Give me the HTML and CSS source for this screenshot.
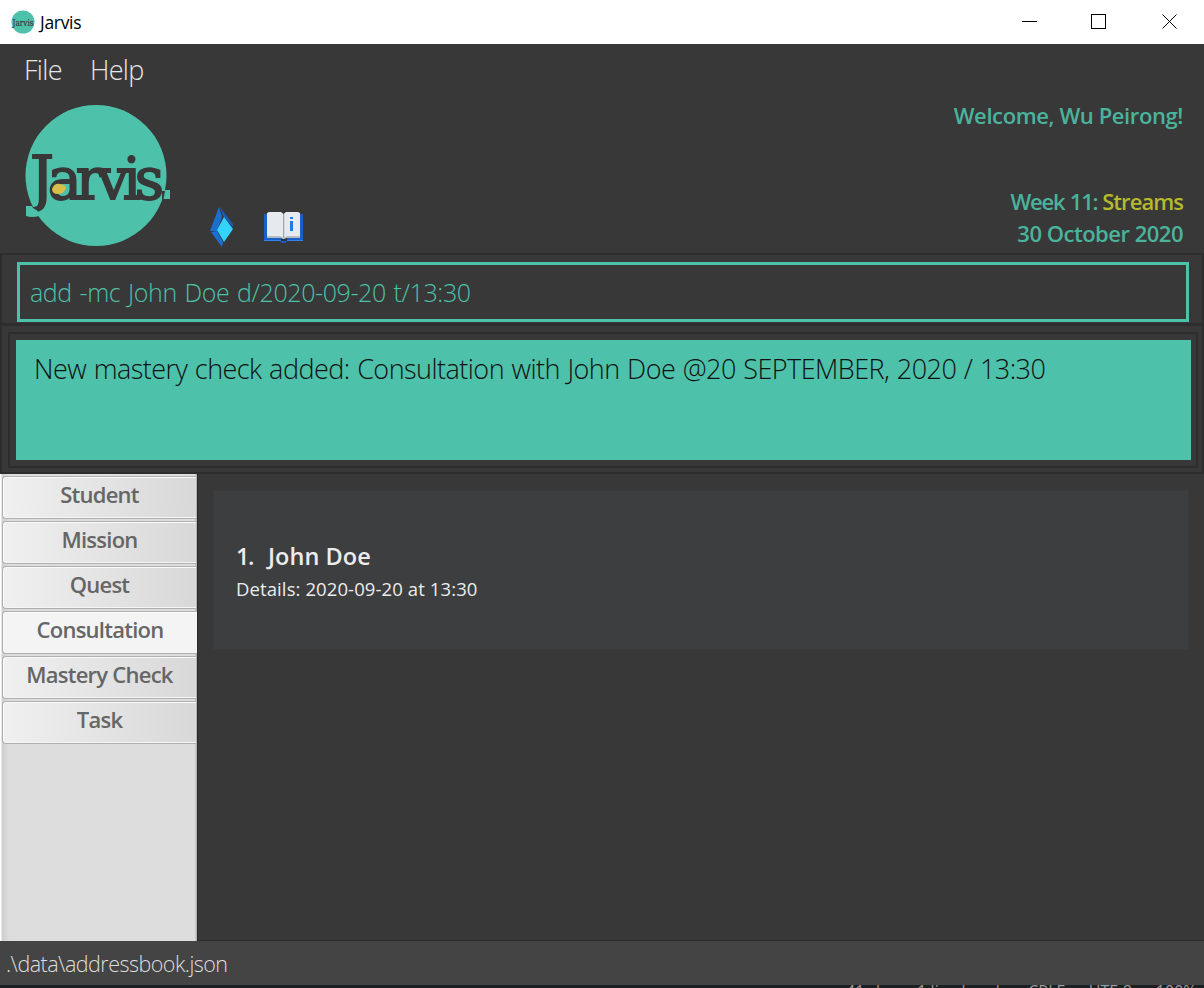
FILE: index.html
```html
<!DOCTYPE html>
<html lang="en">
<head>
<meta charset="utf-8">
<title>Jarvis</title>
<link rel="stylesheet" href="styles.css">
</head>
<body>
<div class="window">
  <header class="titlebar">
    <svg class="app-icon" viewBox="0 0 24 24"><circle cx="12" cy="12" r="11.5" fill="#4dc1a9"/><text x="1.500" y="15.500" textLength="21" lengthAdjust="spacingAndGlyphs" class="logo-text" font-size="10">Jarvis</text></svg>
    <span class="app-name">Jarvis</span>
    <svg class="controls" viewBox="0 0 156 16" fill="none" stroke="#000" shape-rendering="crispEdges"><path d="M0 7.500h15M69.500.500h14v14h-14z"/><path d="M140.500.500l14 14M154.500.500l-14 14" shape-rendering="auto"/></svg>
  </header>
  <nav class="menu"><span class="file">File</span><span class="help">Help</span></nav>
  <section class="header">
    <svg class="logo" viewBox="0 0 150 144">
      <circle cx="74" cy="71.500" r="70.500" fill="#4dc1a9"/>
      <path d="M143 86h5v9h-8z" fill="#4dc1a9"/>
      <text x="8" y="95" textLength="134" lengthAdjust="spacing" class="logo-text" font-size="60"><tspan class="logo-j">J</tspan><tspan font-size="57">arvis</tspan></text>
      <path d="M4 102h6q1 3 5 4l2 6q-7 2-13 0z" fill="#4dc1a9"/>
      <path d="M30 85q2-6 8-5q6 1 6 4q-2 6-8 6q-6 0-6-5z" fill="#d8bd49"/>
      <path d="M140 87h3l-1.500 8H140z" fill="#383838"/>
    </svg>
    <svg class="gem" viewBox="0 0 24 40">
      <path d="M9 0l3 10-5 14H0z" fill="#1b6fd0"/><path d="M10 0l13 17v3L13 9z" fill="#185cb5"/><path d="M1 25l6-1 6 11-1 5z" fill="#1b6fd0"/><path d="M14 10l9 12-9 13-7-12z" fill="#32d3fd"/>
    </svg>
    <svg class="book" viewBox="0 0 40 32">
      <path d="M0 3h39v27H23l-2 2h-3l-2-2H0z" fill="#1a5fc8"/><path d="M0 29h39v1H0z" fill="#3183e5"/><path d="M17 27h6v3h-6z" fill="#283442"/>
      <path d="M3 2l2-1h12l2.500 2L22 1h12l2 1v25H22l-2 1-3-1H3z" fill="#e6eaee"/><path d="M3 25h13l3.500 2 3.500-2h13v2H22l-2 1-3-1H3z" fill="#b4bdc4"/><path d="M19 3h1.300v24H19z" fill="#9eaab2"/><path d="M26 10h3v10h-3zM26 6h3v2h-3z" fill="#1d7ae8"/>
    </svg>
    <div class="info">
      <div class="welcome">Welcome, Wu Peirong!</div>
      <div class="week"><span class="week-no">Week 11:</span> <span class="topic">Streams</span></div>
      <div class="date">30 October 2020</div>
    </div>
  </section>
  <section class="command"><div class="input"><span>add -mc John Doe d/2020-09-20 t/13:30</span></div></section>
  <section class="result"><div class="result-frame"><div class="result-box"><span>New mastery check added: Consultation with John Doe @20 SEPTEMBER, 2020 / 13:30</span></div></div></section>
  <main class="content">
    <aside class="tabs">
      <div class="tab">Student</div>
      <div class="tab">Mission</div>
      <div class="tab">Quest</div>
      <div class="tab selected">Consultation</div>
      <div class="tab">Mastery Check</div>
      <div class="tab">Task</div>
    </aside>
    <div class="list">
      <article class="card">
        <div class="name"><span class="num">1.</span><span class="person">John Doe</span></div>
        <div class="details"><span>Details: 2020-09-20 at 13:30</span></div>
      </article>
    </div>
  </main>
  <footer class="status"><span>.\data\addressbook.json</span></footer>
  <div class="behind"><span>41 chars, 1 line break</span><span>CRLF</span><span>UTF-8</span><span>100%</span></div>
</div>
</body>
</html>
```

FILE: styles.css
```css
* { box-sizing: border-box; }
body { margin: 0; font-family: "Open Sans", "Noto Sans", sans-serif; background: #383838; }
.window { width: 1204px; height: 988px; display: flex; flex-direction: column; overflow: hidden; white-space: nowrap; background: #383838; }
.window svg { display: block; flex: none; }
.titlebar { height: 44px; flex: none; background: #fff; display: flex; align-items: center; padding: 0 26px 0 11px; }
.app-icon { width: 24px; height: 24px; margin-right: 5px; margin-bottom: 1px; }
.app-name { font-size: 17.5px; line-height: 43px; color: #000; letter-spacing: -.3px; }
.controls { width: 156px; height: 16px; margin-left: auto; }
.logo-text { font-family: "DejaVu Serif", serif; font-weight: 400; fill: #383838; stroke: #383838; stroke-width: 1.8px; }
.app-icon .logo-text { stroke-width: .2px; }
.menu { height: 56px; flex: none; display: flex; padding-left: 24px; font-size: 27px; font-weight: 300; line-height: 52px; color: #e6e6e6; }
.file { width: 66px; }
.menu span { letter-spacing: -.7px; }
.header { height: 153px; flex: none; display: flex; padding: 4px 21px 0 22px; }
.logo { width: 150px; height: 144px; }
.gem { width: 24px; height: 40px; margin: 103px 0 0 38px; }
.book { width: 40px; height: 32px; margin: 107px 0 0 30px; }
.info { margin-left: auto; text-align: right; font-size: 22px; font-weight: 600; line-height: 32px; color: #4bb39c; letter-spacing: -.5px; }
.welcome { margin-top: -5px; padding-bottom: 54px; letter-spacing: -.4px; }
.week { letter-spacing: -.95px; }
.week-no { letter-spacing: -1.2px; word-spacing: 1px; }
.topic { color: #b7b92c; }
.command { height: 71px; flex: none; border: 2px solid #2d2d2d; border-bottom-width: 1px; padding: 7px 13px 0 15px; }
.input { height: 60px; border: 3px solid #4dc1a9; padding-left: 10px; color: #4dc1a9; font-size: 25px; font-weight: 300; line-height: 55px; letter-spacing: -.4px; word-spacing: 1.6px; }
.result { height: 150px; flex: none; border: 2px solid #2d2d2d; padding: 6px 4px 0 6px; }
.result-frame { height: 136px; border: 2px solid #2d2d2d; padding: 6px 5px 6px 6px; }
.result-box { height: 120px; background: #4dc1a9; padding-left: 18px; color: #111; font-size: 27px; font-weight: 300; line-height: 58px; letter-spacing: -.54px; word-spacing: 1px; }
.content { height: 467px; flex: none; display: flex; }
.tabs { width: 197px; padding: 2px 0 0 2px; background: linear-gradient(90deg, #fff 0 1px, #cfcfcf 2px, #ddd 9px, #ddd 195px, #b5b5b5 196px); }
.tab { height: 43px; margin: 0 1px 2px 0; border: 1px solid #b0b0b0; border-right: 0; border-radius: 4px 0 0 4px; box-shadow: inset 1px 1px #fafafa, inset 0 -1px #f5f5f5; background: linear-gradient(90deg, #f0f0f0, #d8d8d8); text-align: center; color: #666; font-size: 22px; font-weight: 600; line-height: 34px; letter-spacing: -.75px; }
.tab.selected { background: #f4f4f4; margin-right: 0; }
.list { flex: 1; border-left: 1px solid #292929; border-bottom: 1px solid #2b2b2b; padding: 16px 15px 0; }
.card { height: 160px; background: #3c3e40; border: 1px solid #3a3b3c; padding: 48px 0 0 22px; color: #ececec; }
.name { font-size: 23.5px; font-weight: 600; line-height: 34px; display: flex; }
.num { width: 32px; letter-spacing: -1.5px; }
.person { letter-spacing: .05px; }
.details { font-size: 18.5px; line-height: 32px; letter-spacing: .1px; }
.status { height: 44px; flex: none; background: #444; padding-left: 6px; color: #dedede; font-size: 21.5px; font-weight: 300; line-height: 46px; letter-spacing: -.52px; }
.behind { height: 3px; flex: none; overflow: hidden; background: #1b2023; display: flex; gap: 24px; padding-left: 846px; font-size: 16px; line-height: 12px; color: #9a9a9a; }
```
